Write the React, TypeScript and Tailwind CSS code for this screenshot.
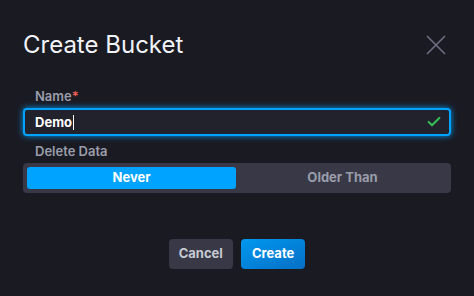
import { Check, X } from "lucide-react";

export default function App() {
  return (
    <div
      className="h-[296px] w-[474px] bg-[#1a1a22] px-[23px] pt-[28px] text-white"
      style={{ fontFamily: "Inter, 'Noto Sans', sans-serif" }}
    >
      <div className="flex items-center justify-between">
        <h1 className="text-[24px] leading-[32px] font-normal text-[#f1f3f8]">Create Bucket</h1>
        <button className="-mr-[2px] text-[#6b6e80]">
          <X size={34} strokeWidth={1.2} />
        </button>
      </div>

      <div className="mt-[26px] px-[12px] text-[13px] font-semibold leading-[16px] text-[#999dab]">
        Name<span className="text-[#f95f53]">*</span>
      </div>
      <div className="mt-[4px] flex h-[28px] items-center justify-between rounded-[4px] border-2 border-[#00a3ff] bg-[#22222c] pl-[10px] pr-[7px] shadow-[0_0_6px_#0098f0]">
        <span className="text-[13px] font-bold text-white">
          Demo<span className="ml-[1px] inline-block h-[15px] w-px translate-y-[3px] bg-white" />
        </span>
        <Check size={16} strokeWidth={3.2} className="text-[#34bb55]" />
      </div>

      <div className="mt-[7px] px-[12px] text-[13px] font-semibold leading-[16px] text-[#999dab]">
        Delete Data
      </div>
      <div className="mt-[4px] flex h-[30px] gap-[2px] rounded-[4px] bg-[#383846] p-[4px]">
        <button className="flex-1 rounded-[3px] bg-[#00a3ff] text-[13px] font-bold text-white">Never</button>
        <button className="flex-1 rounded-[3px] text-[13px] font-bold text-[#999dab]">Older Than</button>
      </div>

      <div className="mt-[46px] flex justify-center gap-[8px]">
        <button className="h-[30px] rounded-[4px] bg-[#383846] px-[10px] text-[13px] font-bold text-[#c6cad3]">
          Cancel
        </button>
        <button className="h-[30px] rounded-[4px] bg-gradient-to-br from-[#0098f0] to-[#066fc5] px-[11px] text-[13px] font-bold text-white">
          Create
        </button>
      </div>
    </div>
  );
}
